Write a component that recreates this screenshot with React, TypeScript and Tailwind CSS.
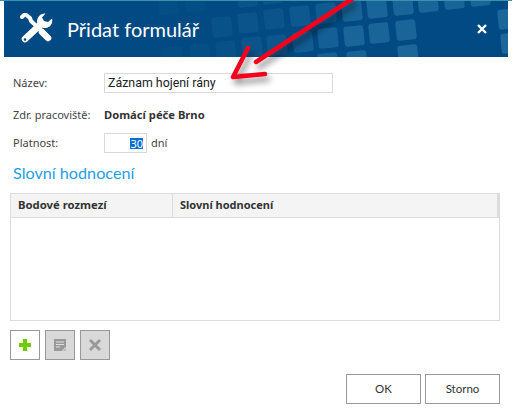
const squares: [number, number, number][] = [
  [158, -5, 0.12], [185, -8, 0.12], [212, 17, 0.25], [238, 13, 0.3], [264, 9, 0.3], [290, 6, 0.4], [316, 3, 0.45],
  [237, -13, 0.3], [262, -16, 0.3], [163, 47, 0.12], [190, 44, 0.15], [216, 41, 0.2], [242, 37, 0.3], [267, 35, 0.35],
  [293, 32, 0.5], [318, 28, 0.6], [344, 26, 0.75], [369, 23, 0.75], [396, 20, 0.75],
  [318, 53, 0.6], [347, 51, 0.7], [398, 45, 0.8], [342, 1, 0.7], [367, -2, 0.75], [393, -5, 0.75], [418, -8, 0.75],
  [444, -11, 0.75], [470, -14, 0.75], [498, 9, 0.8], [501, 33, 0.8], [290, -19, 0.4], [316, -21, 0.45],
];

function Pattern() {
  return (
    <svg className="absolute inset-0 h-full w-full" viewBox="4 1 504 56" aria-hidden="true">
      {squares.map(([x, y, o], i) => (
        <rect key={i} x={x} y={y} width="20" height="20" rx="3" fill="#3d8db8" opacity={o * 0.55} transform={`rotate(-6 ${x + 10} ${y + 10})`} />
      ))}
    </svg>
  );
}

function Tools() {
  return (
    <svg width="33" height="32" viewBox="0 0 33 32" aria-hidden="true" className="shrink-0">
      <path d="M2 4 L5 1 L10 5 L11 8 L29 25" stroke="#fff" strokeWidth="4" fill="none" strokeLinecap="round" strokeLinejoin="round" />
      <path d="M22 19 L28 25" stroke="#fff" strokeWidth="6.5" strokeLinecap="round" />
      <path d="M5 26 L20 12" stroke="#fff" strokeWidth="6.5" strokeLinecap="round" />
      <path d="M25.5 0.5 L22 4.5 L24 8 L28 9 L32 5.5 C33 9.5 31 14.5 26 15 C22 15.5 18 13 17 9 C17 4 20.5 0 25.5 0.5 Z" fill="#fff" />
      <circle cx="5" cy="26.5" r="1.3" fill="#014a83" />
    </svg>
  );
}

function Arrow() {
  return (
    <svg className="pointer-events-none absolute left-[220px] top-0" width="140" height="90" viewBox="220 0 140 90" aria-hidden="true">
      <defs>
        <filter id="arrow-shadow" x="-20%" y="-20%" width="140%" height="140%">
          <feDropShadow dx="3" dy="5" stdDeviation="3" floodColor="#000" floodOpacity="0.45" />
        </filter>
      </defs>
      <g filter="url(#arrow-shadow)" fill="none" stroke="#f5001e" strokeLinecap="round" strokeLinejoin="round">
        <path d="M352 -1 L256 62" strokeWidth="4.5" />
        <path d="M248 48 L233 77 L265 74" strokeWidth="4.5" />
      </g>
    </svg>
  );
}

function IconButton({ disabled, children }: { disabled?: boolean; children: React.ReactNode }) {
  return (
    <button className={`flex h-[30px] w-[30px] items-center justify-center border border-[#999] ${disabled ? "bg-[#d9d9d9]" : "bg-white"}`}>
      {children}
    </button>
  );
}

export default function App() {
  return (
    <div className="relative h-[419px] w-[512px] overflow-hidden bg-white text-[11px] text-[#444]" style={{ fontFamily: '"Noto Sans", "Open Sans", sans-serif' }}>
      <div className="h-px bg-[#3b93ab]" />
      <header className="relative ml-1 flex h-14 w-[504px] items-center bg-[#014a83] pl-4 pr-[21px] text-white">
        <Pattern />
        <div className="relative flex flex-1 items-center gap-[14px]">
          <Tools />
          <h1 className="font-['Lato',sans-serif] text-[20px] leading-none">Přidat formulář</h1>
        </div>
        <svg className="relative" width="10" height="10" viewBox="0 0 10 10" aria-hidden="true">
          <path d="M1 1 L9 9 M9 1 L1 9" stroke="#fff" strokeWidth="2.4" />
        </svg>
      </header>

      <div className="px-[10px] pt-4">
        <div className="flex h-5 items-center">
          <label className="w-[94px] pl-[3px]">Název:</label>
          <div className="flex h-5 w-[229px] items-center border border-[#d9d9d9] px-[3px] text-[#222]">
            <span className="font-['Roboto',sans-serif] text-[12.4px]">Záznam hojení rány</span>
          </div>
        </div>
        <div className="mt-3 flex h-5 items-center">
          <span className="w-[94px] pl-[3px]">Zdr. pracoviště:</span>
          <b className="text-[11.2px] font-bold text-[#333]">Domácí péče Brno</b>
        </div>
        <div className="mt-2 flex h-5 items-center">
          <label className="w-[94px] pl-[3px]">Platnost:</label>
          <div className="flex h-5 w-[43px] items-center justify-end border border-[#d9d9d9] pr-[3px]">
            <span className="bg-[#0a6fd0] leading-[11px] text-white">30</span>
          </div>
          <span className="ml-[4px]">dní</span>
        </div>
        <h2 className="mt-[9px] pl-[3px] font-['Lato',sans-serif] text-[16.2px] leading-[22px] text-[#1ea0e8]">Slovní hodnocení</h2>
        <div className="mt-[9px] h-[128px] w-[490px] border border-t-0 border-[#dcdcdc]">
          <div className="flex h-[25px] border-y border-r-2 border-[#dcdcdc] bg-[#f4f4f4] font-bold text-[#333]">
            <div className="flex w-[162px] items-center border-r border-[#dcdcdc] pl-[7px] text-[11.3px]">Bodové rozmezí</div>
            <div className="flex items-center pl-[7px]">Slovní hodnocení</div>
          </div>
        </div>
        <div className="mt-[9px] flex gap-[5px]">
          <IconButton>
            <svg width="12" height="12" viewBox="0 0 12 12" aria-hidden="true">
              <path d="M4 0H8V4H12V8H8V12H4V8H0V4H4Z" fill="#6fcb00" />
            </svg>
          </IconButton>
          <IconButton disabled>
            <svg width="12" height="12" viewBox="0 0 12 12" aria-hidden="true">
              <path d="M0 0H12V7.5L7.5 12H0Z" fill="#999" />
              <path d="M2 3H10M2 5.5H10M2 8H6" stroke="#e0e0e0" strokeWidth="1" />
              <path d="M8.5 12 L12 8.5 V12Z" fill="#bbb" />
            </svg>
          </IconButton>
          <IconButton disabled>
            <svg width="14" height="14" viewBox="0 0 14 14" aria-hidden="true">
              <path d="M2 2 L12 12 M12 2 L2 12" stroke="#999" strokeWidth="3" />
            </svg>
          </IconButton>
        </div>
        <div className="mt-[14px] flex justify-end gap-1 pr-[2px] font-['Lato',sans-serif] text-[11.5px] text-[#333]">
          <button className="h-[30px] w-[75px] border border-[#999] bg-white">OK</button>
          <button className="h-[30px] w-[75px] border border-[#999] bg-white">Storno</button>
        </div>
      </div>
      <Arrow />
    </div>
  );
}
